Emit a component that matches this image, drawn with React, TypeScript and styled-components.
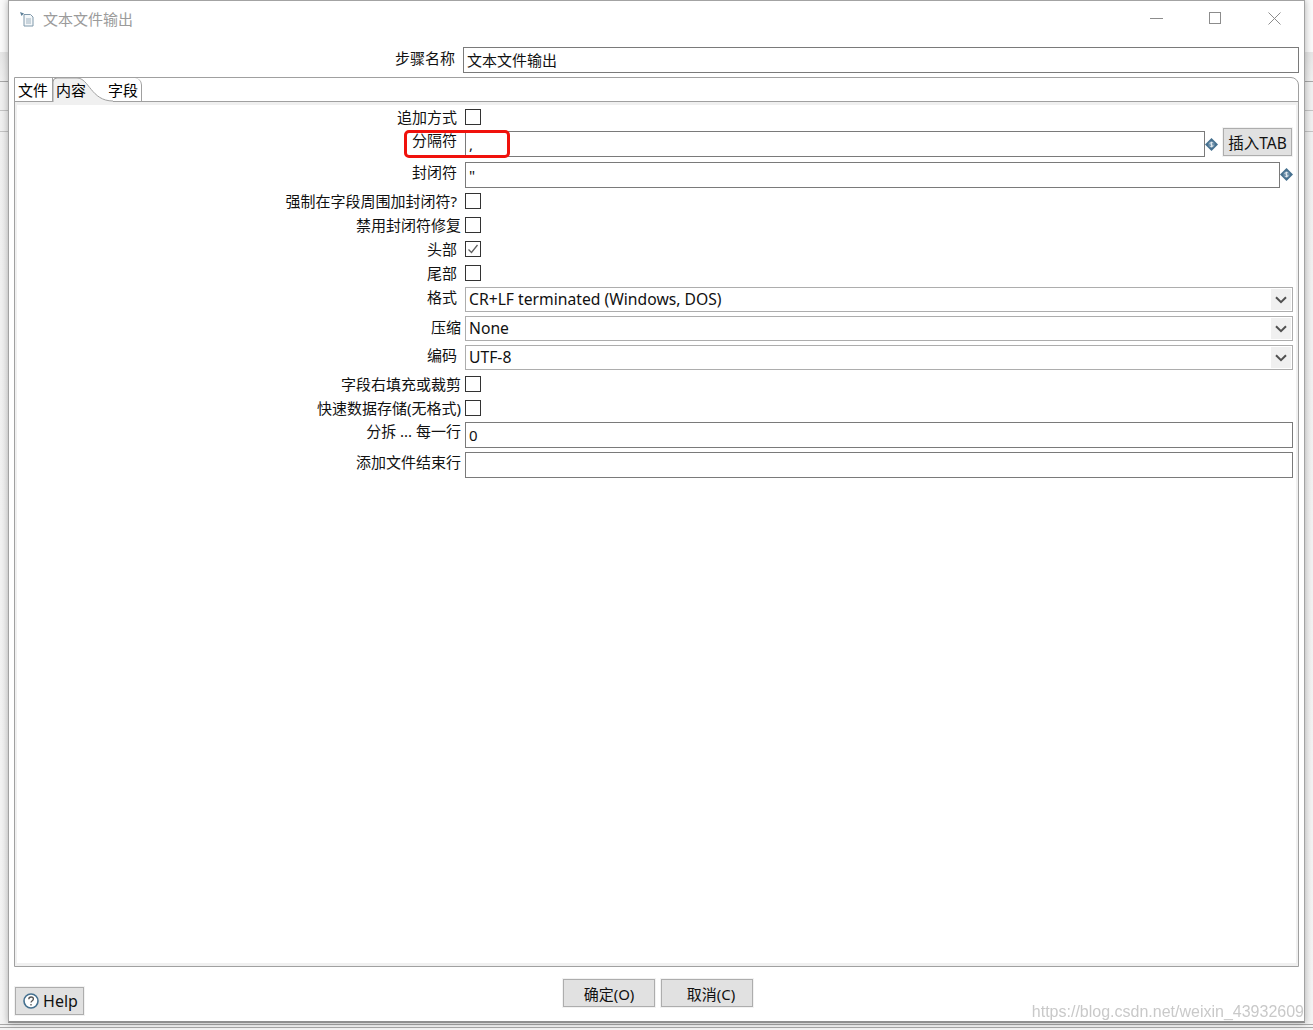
import React from 'react'
import styled, { createGlobalStyle } from 'styled-components'

const GlobalStyle = createGlobalStyle`
  html, body {
    margin: 0;
    height: 1030px;
    overflow: hidden;
    font-family: "Noto Sans", "Noto Sans CJK SC", sans-serif;
    font-size: 15px;
    color: #111;
    background:
      linear-gradient(#a8a8a8, #a8a8a8) 0 81px / 100% 1px no-repeat,
      linear-gradient(#c4c4c4, #c4c4c4) 0 110px / 100% 1px no-repeat,
      linear-gradient(#c4c4c4, #c4c4c4) 0 131px / 100% 1px no-repeat,
      linear-gradient(#a8a8a8, #a8a8a8) 0 1024px / 100% 1px no-repeat,
      linear-gradient(#a8a8a8, #a8a8a8) 0 1027px / 100% 1px no-repeat,
      linear-gradient(#fafafa 52px, #e6e6e6 52px, #f0f0f0 81px, #f4f4f4 100%);
  }
`

const Window = styled.div`
  position: relative;
  box-sizing: border-box;
  display: flex;
  flex-direction: column;
  width: 1297px;
  height: 1023px;
  margin-left: 8px;
  background: #fff;
  border: 1px solid #a3a3a3;
  border-bottom: 2px solid #8f8f8f;
  box-shadow: 0 0 7px rgba(0, 0, 0, 0.3);
`

const TitleBar = styled.div`
  box-sizing: border-box;
  display: flex;
  align-items: center;
  flex: none;
  height: 38px;
  padding: 0 0 2px 10px;
  color: #9b9b9b;
`

const TitleIcon = styled.svg`
  width: 16px;
  height: 16px;
  margin-right: 8px;
`

const TitleText = styled.span`
  flex: 1;
  padding-bottom: 2px;
`

const WindowButton = styled.svg<{ $gap: number }>`
  width: 13px;
  height: 13px;
  margin: 0 ${(p) => p.$gap}px 2px 0;
  fill: none;
  stroke: #8c8c8c;
  stroke-width: 1;
`

const StepRow = styled.div`
  display: flex;
  align-items: center;
  flex: none;
  height: 26px;
  margin-top: 8px;
  padding-right: 5px;
`

const StepLabel = styled.div`
  box-sizing: border-box;
  flex: none;
  width: 454px;
  padding-right: 8px;
  padding-bottom: 6px;
  text-align: right;
`

const TextInput = styled.div<{ $width?: number }>`
  box-sizing: border-box;
  flex: ${(p) => (p.$width ? 'none' : '1')};
  width: ${(p) => (p.$width ? `${p.$width}px` : 'auto')};
  height: 26px;
  padding-left: 3px;
  border: 1px solid #7a7a7a;
  line-height: 24px;
  white-space: nowrap;
  font-size: 15px;
  background: #fff;
`

const Folder = styled.div`
  box-sizing: border-box;
  display: flex;
  flex-direction: column;
  flex: none;
  height: 890px;
  margin: 4px 5px 0;
  border: 1px solid #a0a0a0;
  border-radius: 0 8px 0 0;
`

const TabStrip = styled.div`
  display: flex;
  flex: none;
  height: 23px;
  border-bottom: 1px solid #a0a0a0;
`

const Tab = styled.div`
  position: relative;
  box-sizing: border-box;
  flex: none;
  height: 24px;
  line-height: 24px;
  font-size: 15px;
  color: #000;
`

const FirstTab = styled(Tab)`
  width: 38px;
  padding-left: 3px;
  border-right: 1px solid #a0a0a0;
  border-radius: 6px 0 0 0;
`

const ActiveTab = styled(Tab)`
  width: 55px;
  padding-left: 3px;
`

const TabCurve = styled.svg`
  position: absolute;
  left: 0;
  top: -1px;
  z-index: 0;
`

const TabLabel = styled.span`
  position: relative;
  z-index: 1;
`

const LastTab = styled(Tab)`
  width: 37px;
  margin-left: -3px;
  padding-left: 3px;
  height: 23px;
  border-right: 1px solid #a0a0a0;
  border-radius: 0 7px 0 0;
`

const Pane = styled.div`
  flex: 1;
  display: flex;
  flex-direction: column;
  border: solid #f0f0f0;
  border-width: 3px 2px 3px 2px;
`

const Row = styled.div<{ $height: number }>`
  position: relative;
  display: flex;
  align-items: center;
  flex: none;
  height: ${(p) => p.$height}px;
  padding-right: 3px;
`

const Label = styled.div<{ $right?: number; $lift?: number }>`
  box-sizing: border-box;
  flex: none;
  width: 448px;
  padding-right: ${(p) => p.$right ?? 8}px;
  padding-bottom: ${(p) => p.$lift ?? 0}px;
  text-align: right;
  white-space: nowrap;
  line-height: 20px;
`

const CheckBox = styled.div`
  box-sizing: border-box;
  display: flex;
  align-items: center;
  justify-content: center;
  width: 16px;
  height: 16px;
  border: 1px solid #333;
  background: #fff;
`

const Combo = styled.div`
  box-sizing: border-box;
  display: flex;
  align-items: center;
  justify-content: space-between;
  flex: 1;
  height: 25px;
  padding: 1px 1px 1px 3px;
  border: 1px solid #adadad;
  font-size: 15.7px;
  background: #fff;
`

const ComboText = styled.span`
  padding-bottom: 2px;
`

const ComboArrow = styled.div`
  display: flex;
  align-items: center;
  justify-content: center;
  width: 20px;
  height: 100%;
  background: #f0f0f0;
`

const VarIcon = styled.svg`
  flex: none;
  width: 13px;
  height: 13px;
`

const PushButton = styled.div<{ $width: number }>`
  box-sizing: border-box;
  flex: none;
  display: flex;
  align-items: center;
  justify-content: center;
  width: ${(p) => p.$width}px;
  height: 28px;
  border: 1px solid #adadad;
  background: #e1e1e1;
  box-shadow: 0 0 0 1px #f2f2f2;
  font-size: 15px;
`

const InsertButton = styled(PushButton)`
  margin-left: 5px;
  margin-bottom: 4px;
  font-size: 15.5px;
`

const Footer = styled.div`
  flex: 1;
  display: flex;
  padding-left: 6px;
`

const HelpButton = styled(PushButton)`
  gap: 4px;
  margin-top: 20px;
  padding-left: 2px;
  font-size: 16px;
`

const DialogButton = styled(PushButton)`
  margin-top: 12px;
  margin-left: 6px;
`

const OkButton = styled(DialogButton)`
  margin-left: 479px;
`

const CancelButton = styled(DialogButton)`
  padding-left: 8px;
`

const Highlight = styled.div`
  position: absolute;
  left: 387px;
  top: 2px;
  width: 106px;
  height: 28px;
  box-sizing: border-box;
  border: 3px solid #f0120c;
  border-radius: 5px;
`

const Watermark = styled.div`
  position: absolute;
  right: 0;
  bottom: -2px;
  font-family: "Liberation Sans", Arial, sans-serif;
  font-size: 16px;
  line-height: 22px;
  color: #c9c9c9;
  filter: blur(0.5px);
`

const Var = () => (
  <VarIcon viewBox="0 0 13 13">
    <path d="M6.5 0 13 6.5 6.5 13 0 6.5Z" fill="#46708f" />
    <circle cx="6.5" cy="6.5" r="3.2" fill="#6f91ab" />
    <path d="M8 5c-.5-.7-3-.8-3 .4S8 6.600 8 7.800 5.500 8.800 5 8M6.500 3.800v5.400" fill="none" stroke="#e8eef3" strokeWidth="0.9" />
  </VarIcon>
)

const Chevron = () => (
  <svg width="12" height="8" viewBox="0 0 12 8">
    <path d="M1 1.200 6 6.200 11 1.200" fill="none" stroke="#505050" strokeWidth="2" />
  </svg>
)

const Check = ({ on }: { on?: boolean }) => (
  <CheckBox>
    {on && (
      <svg width="12" height="12" viewBox="0 0 12 12">
        <path d="M1.500 6.500 4.500 9.500 10.500 2" fill="none" stroke="#606060" strokeWidth="1.300" />
      </svg>
    )}
  </CheckBox>
)

export default function App() {
  return (
    <>
      <GlobalStyle />
      <Window>
        <TitleBar>
          <TitleIcon viewBox="0 0 16 16">
            <path d="M5 3.500h6.500l2.500 2.500v9H5Z" fill="#f4f7f9" stroke="#7f98aa" />
            <path d="M7 8h5M7 10h5M7 12h5" stroke="#9fb2c0" />
            <path d="M1 1 5 2.500 2.500 5Z" fill="#5c7f98" />
          </TitleIcon>
          <TitleText>文本文件输出</TitleText>
          <WindowButton $gap={46} viewBox="0 0 13 13">
            <path d="M0 6.500h13" />
          </WindowButton>
          <WindowButton $gap={46} viewBox="0 0 13 13">
            <rect x="0.500" y="0.500" width="11" height="11" />
          </WindowButton>
          <WindowButton $gap={23} viewBox="0 0 13 13">
            <path d="M0.500 0.500 12.500 12.500M12.500 0.500 0.500 12.500" />
          </WindowButton>
        </TitleBar>

        <StepRow>
          <StepLabel>步骤名称</StepLabel>
          <TextInput>文本文件输出</TextInput>
        </StepRow>

        <Folder>
          <TabStrip>
            <FirstTab>文件</FirstTab>
            <ActiveTab>
              <TabCurve width="62" height="25" viewBox="0 0 62 25">
                <path d="M0 25V5Q0 1 4 1H24C36 1 38 24 60 24V25Z" fill="#f0f0f0" />
                <path d="M0 25V5Q0 1 4 1H24C36 1 38 24 60 24" fill="none" stroke="#a0a0a0" />
              </TabCurve>
              <TabLabel>内容</TabLabel>
            </ActiveTab>
            <LastTab>
              <TabLabel>字段</TabLabel>
            </LastTab>
          </TabStrip>
          <Pane>
            <Row $height={23}>
              <Label>追加方式</Label>
              <Check />
            </Row>
            <Row $height={32}>
              <Label $lift={8}>分隔符</Label>
              <TextInput $width={740}>,</TextInput>
              <Var />
              <InsertButton $width={69}>插入TAB</InsertButton>
              <Highlight />
            </Row>
            <Row $height={29}>
              <Label $lift={6}>封闭符</Label>
              <TextInput $width={815}>"</TextInput>
              <Var />
            </Row>
            <Row $height={24}>
              <Label>强制在字段周围加封闭符?</Label>
              <Check />
            </Row>
            <Row $height={24}>
              <Label $right={4}>禁用封闭符修复</Label>
              <Check />
            </Row>
            <Row $height={24}>
              <Label>头部</Label>
              <Check on />
            </Row>
            <Row $height={24}>
              <Label>尾部</Label>
              <Check />
            </Row>
            <Row $height={29}>
              <Label $lift={5}>格式</Label>
              <Combo>
                <ComboText>CR+LF terminated (Windows, DOS)</ComboText>
                <ComboArrow>
                  <Chevron />
                </ComboArrow>
              </Combo>
            </Row>
            <Row $height={29}>
              <Label $right={4} $lift={3}>压缩</Label>
              <Combo>
                <ComboText>None</ComboText>
                <ComboArrow>
                  <Chevron />
                </ComboArrow>
              </Combo>
            </Row>
            <Row $height={29}>
              <Label $lift={5}>编码</Label>
              <Combo>
                <ComboText>UTF-8</ComboText>
                <ComboArrow>
                  <Chevron />
                </ComboArrow>
              </Combo>
            </Row>
            <Row $height={24}>
              <Label $right={4}>字段右填充或裁剪</Label>
              <Check />
            </Row>
            <Row $height={23}>
              <Label $right={4}>快速数据存储(无格式)</Label>
              <Check />
            </Row>
            <Row $height={31}>
              <Label $right={4} $lift={7}>分拆 ... 每一行</Label>
              <TextInput>0</TextInput>
            </Row>
            <Row $height={30}>
              <Label $right={4} $lift={7}>添加文件结束行</Label>
              <TextInput />
            </Row>
          </Pane>
        </Folder>

        <Footer>
          <HelpButton $width={69}>
            <svg width="16" height="16" viewBox="0 0 16 16">
              <circle cx="8" cy="8" r="7" fill="#fff" stroke="#44708f" strokeWidth="1.600" />
              <path d="M5.800 6.200c0-3 4.600-2.800 4.600-.2 0 1.700-2.400 1.800-2.400 3.600M8 11v1.500" fill="none" stroke="#555" strokeWidth="1.300" />
            </svg>
            Help
          </HelpButton>
          <OkButton $width={92}>确定(O)</OkButton>
          <CancelButton $width={92}>取消(C)</CancelButton>
        </Footer>
        <Watermark>https://blog.csdn.net/weixin_43932609</Watermark>
      </Window>
    </>
  )
}
